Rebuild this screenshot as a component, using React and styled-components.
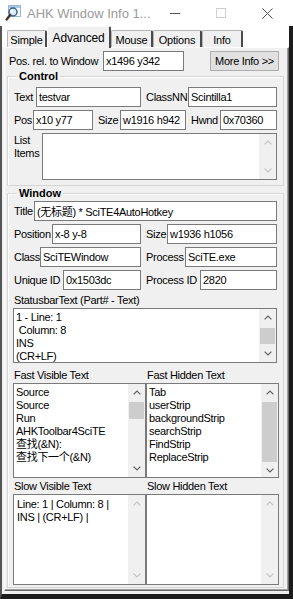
import React from 'react'
import styled, { createGlobalStyle } from 'styled-components'

const GlobalStyle = createGlobalStyle`
  html, body {
    margin: 0;
    padding: 0;
    background: #fff;
  }
  body {
    font-family: "Liberation Sans", Arial, "Noto Sans CJK SC", sans-serif;
    font-size: 11px;
    letter-spacing: -0.3px;
    color: #000;
  }
`

const Window = styled.div`
  width: 293px;
  height: 599px;
  display: flex;
  flex-direction: column;
  background: #f0f0f0;
  overflow: hidden;
`

const TitleBar = styled.div`
  height: 26px;
  flex-shrink: 0;
  display: flex;
  align-items: center;
  background: #fff;
  padding-left: 5px;
`

const Caption = styled.div`
  margin-left: 6px;
  font-size: 13px;
  letter-spacing: 0;
  color: #9a9a9a;
  white-space: nowrap;
`

const CaptionButtons = styled.div`
  margin-left: auto;
  margin-right: 3px;
  display: flex;
  height: 100%;
`

const CaptionButton = styled.div`
  width: 46px;
  display: flex;
  align-items: center;
  justify-content: center;
`

const Body = styled.div`
  flex: 1;
  min-height: 0;
  display: flex;
  flex-direction: column;
  border-left: 2px solid #555;
  border-right: 4px solid #1b1b1b;
  border-bottom: 5px solid #1b1b1b;
`

const TabStrip = styled.div`
  height: 21px;
  flex-shrink: 0;
  display: flex;
  align-items: flex-end;
  padding-left: 5px;
  background: #fff;
  position: relative;
  z-index: 1;
`

const Tab = styled.div`
  box-sizing: border-box;
  width: ${p => p.$w}px;
  height: ${p => (p.$active ? 22 : 17)}px;
  margin-bottom: ${p => (p.$active ? -1 : 0)}px;
  display: flex;
  align-items: center;
  justify-content: center;
  padding-top: ${p => (p.$active ? 0 : 1)}px;
  background: #f0f0f0;
  border-top: 1px solid ${p => (p.$active ? '#fff' : '#b5b5b5')};
  border-left: 1px solid ${p => (p.$active ? '#fff' : '#b5b5b5')};
  border-right: 2px solid #4a4a4a;
  border-top-left-radius: 2px;
  border-top-right-radius: 2px;
  font-size: ${p => (p.$active ? 12 : 11)}px;
  letter-spacing: -0.2px;
  white-space: nowrap;
`

const Panel = styled.div`
  flex: 1;
  min-height: 0;
  display: flex;
  flex-direction: column;
  margin: 0 0 3px 2px;
  padding: 3px 2px 2px 1px;
  border-top: 1px solid #fff;
  border-left: 1px solid #fff;
  border-right: 1px solid #696969;
  border-bottom: 1px solid #696969;
  box-shadow: inset -1px -1px 0 #a0a0a0;
`

const PosRow = styled.div`
  height: 20px;
  display: flex;
  align-items: center;
  padding-left: 3px;
`

const Label = styled.div`
  width: ${p => (p.$w ? `${p.$w}px` : 'auto')};
  flex-shrink: 0;
  white-space: nowrap;
  line-height: 13px;
`

const Input = styled.div`
  box-sizing: border-box;
  height: 20px;
  flex: ${p => (p.$w ? 'none' : 1)};
  width: ${p => (p.$w ? `${p.$w}px` : 'auto')};
  min-width: 0;
  display: flex;
  align-items: center;
  padding: 0 2px;
  border: 1px solid #7a7a7a;
  background: #fff;
  white-space: nowrap;
  overflow: hidden;
`

const Button = styled.div`
  box-sizing: border-box;
  margin-left: auto;
  margin-right: 7px;
  width: 69px;
  height: 20px;
  display: flex;
  align-items: center;
  justify-content: center;
  border: 1px solid #adadad;
  background: #e1e1e1;
`

const GroupBox = styled.div`
  margin: ${p => p.$top}px 2px 0 1px;
  padding: 0 6px ${p => p.$bottom}px 6px;
  border: 1px solid #d5d5d5;
  box-shadow: inset 1px 1px 0 #fff;
  display: flex;
  flex-direction: column;
  flex: ${p => (p.$grow ? 1 : 'none')};
  min-height: 0;
`

const GroupTitle = styled.div`
  align-self: flex-start;
  margin: -7px 0 0 3px;
  padding: 0 2px;
  background: #f0f0f0;
  font-weight: bold;
  letter-spacing: 0;
  line-height: 13px;
`

const Rows = styled.div`
  display: flex;
  flex-direction: column;
  gap: 3px;
  margin-top: ${p => p.$top}px;
`

const FieldRow = styled.div`
  display: flex;
  gap: 5px;
`

const Field = styled.div`
  display: flex;
  align-items: center;
  width: ${p => (p.$w ? `${p.$w}px` : 'auto')};
  flex: ${p => (p.$w ? 'none' : 1)};
`

const ListRow = styled.div`
  display: flex;
  align-items: flex-start;
`

const ItemsLabel = styled(Label)`
  padding-top: 1px;
`

const ListBox = styled.div`
  box-sizing: border-box;
  height: ${p => p.$h}px;
  flex: ${p => (p.$fill ? 1 : 'none')};
  min-width: 0;
  display: flex;
  border: 1px solid #7a7a7a;
  background: #fff;
`

const ListContent = styled.div`
  flex: 1;
  min-width: 0;
  padding: ${p => (p.$edit ? '3px 3px' : '2px 2px')};
  line-height: 13px;
  white-space: pre;
  overflow: hidden;
`

const ScrollBar = styled.div`
  width: 17px;
  flex-shrink: 0;
  display: flex;
  flex-direction: column;
  background: #f0f0f0;
`

const ScrollButton = styled.div`
  height: 17px;
  flex-shrink: 0;
  display: flex;
  align-items: center;
  justify-content: center;
`

const Track = styled.div`
  flex: 1;
  display: flex;
  flex-direction: column;
`

const Thumb = styled.div`
  margin: ${p => p.$top}px 1px 0 1px;
  height: ${p => p.$h}px;
  background: #cdcdcd;
`

const SectionLabel = styled.div`
  line-height: 13px;
  margin-top: ${p => p.$top}px;
  margin-bottom: 1px;
  padding-left: ${p => p.$pad || 0}px;
  white-space: nowrap;
`

const Pair = styled.div`
  display: grid;
  grid-template-columns: 133px 133px;
  justify-content: space-between;
  margin-left: -1px;
`

const PairFill = styled(Pair)`
  flex: 1;
  min-height: 0;
`

const Column = styled.div`
  display: flex;
  flex-direction: column;
  min-height: 0;
`

const WideList = styled.div`
  display: flex;
  margin-left: -1px;
`

const AppIcon = () => (
  <svg width="16" height="16" viewBox="0 0 16 16">
    <rect x="3.5" y="0.5" width="12" height="11" fill="#f4f8fc" stroke="#9bb8d6" />
    <rect x="4" y="1" width="11" height="2" fill="#a9c9ea" />
    <circle cx="8" cy="7" r="4" fill="#d6ebfc" stroke="#3d5f85" strokeWidth="1.4" />
    <circle cx="7" cy="6" r="1.5" fill="#fff" opacity="0.8" />
    <path d="M5.2 9.9 L1.6 14.4" stroke="#4a3424" strokeWidth="2.4" strokeLinecap="round" />
  </svg>
)

const Chevron = ({ dir, off }) => (
  <svg width="8" height="5" viewBox="0 0 8 5">
    <path
      d={dir === 'up' ? 'M0.6 4.4 L4 1 L7.4 4.4' : 'M0.6 0.6 L4 4 L7.4 0.6'}
      fill="none"
      stroke={off ? '#c3c3c3' : '#5f5f5f'}
      strokeWidth="1.2"
    />
  </svg>
)

const Scroll = ({ off, thumbTop, thumbH }) => (
  <ScrollBar>
    <ScrollButton><Chevron dir="up" off={off} /></ScrollButton>
    <Track>{!off && <Thumb $top={thumbTop} $h={thumbH} />}</Track>
    <ScrollButton><Chevron dir="down" off={off} /></ScrollButton>
  </ScrollBar>
)

const tabs = [
  { name: 'Simple', w: 40 },
  { name: 'Advanced', w: 64, active: true },
  { name: 'Mouse', w: 42 },
  { name: 'Options', w: 49 },
  { name: 'Info', w: 41 },
]

const fastVisible = ['Source', 'Source', 'Run', 'AHKToolbar4SciTE', '查找(&N):', '查找下一个(&N)']
const fastHidden = ['Tab', 'userStrip', 'backgroundStrip', 'searchStrip', 'FindStrip', 'ReplaceStrip']

export default function App() {
  return (
    <Window>
      <GlobalStyle />
      <TitleBar>
        <AppIcon />
        <Caption>AHK Window Info 1...</Caption>
        <CaptionButtons>
          <CaptionButton>
            <svg width="10" height="10" viewBox="0 0 10 10"><path d="M0 5.5 H10" stroke="#555" /></svg>
          </CaptionButton>
          <CaptionButton>
            <svg width="10" height="10" viewBox="0 0 10 10"><rect x="0.5" y="0.5" width="9" height="9" fill="none" stroke="#cfcfcf" /></svg>
          </CaptionButton>
          <CaptionButton>
            <svg width="11" height="11" viewBox="0 0 11 11"><path d="M0.5 0.5 L10.5 10.5 M10.5 0.5 L0.5 10.5" stroke="#555" /></svg>
          </CaptionButton>
        </CaptionButtons>
      </TitleBar>
      <Body>
        <TabStrip>
          {tabs.map(t => (
            <Tab key={t.name} $w={t.w} $active={t.active}>{t.name}</Tab>
          ))}
        </TabStrip>
        <Panel>
          <PosRow>
            <Label $w={94}>Pos. rel. to Window</Label>
            <Input $w={81}>x1496 y342</Input>
            <Button>More Info &gt;&gt;</Button>
          </PosRow>

          <GroupBox $top={5} $bottom={5}>
            <GroupTitle>Control</GroupTitle>
            <Rows $top={4}>
              <FieldRow>
                <Field $w={127}><Label $w={22}>Text</Label><Input>testvar</Input></Field>
                <Field><Label $w={42}>ClassNN</Label><Input>Scintilla1</Input></Field>
              </FieldRow>
              <FieldRow>
                <Field $w={79}><Label $w={19}>Pos</Label><Input>x10 y77</Input></Field>
                <Field $w={88}><Label $w={22}>Size</Label><Input>w1916 h942</Input></Field>
                <Field><Label $w={29}>Hwnd</Label><Input>0x70360</Input></Field>
              </FieldRow>
              <ListRow>
                <ItemsLabel $w={28}>List<br />Items</ItemsLabel>
                <ListBox $h={47} $fill>
                  <ListContent />
                  <Scroll off />
                </ListBox>
              </ListRow>
            </Rows>
          </GroupBox>

          <GroupBox $top={7} $bottom={2} $grow>
            <GroupTitle>Window</GroupTitle>
            <Rows $top={1}>
              <FieldRow>
                <Field><Label $w={20}>Title</Label><Input>(无标题) * SciTE4AutoHotkey</Input></Field>
              </FieldRow>
              <FieldRow>
                <Field $w={127}><Label $w={38}>Position</Label><Input>x-8 y-8</Input></Field>
                <Field><Label $w={21}>Size</Label><Input>w1936 h1056</Input></Field>
              </FieldRow>
              <FieldRow>
                <Field $w={127}><Label $w={26}>Class</Label><Input>SciTEWindow</Input></Field>
                <Field><Label $w={39}>Process</Label><Input>SciTE.exe</Input></Field>
              </FieldRow>
              <FieldRow>
                <Field $w={127}><Label $w={49}>Unique ID</Label><Input>0x1503dc</Input></Field>
                <Field><Label $w={54}>Process ID</Label><Input>2820</Input></Field>
              </FieldRow>
            </Rows>

            <SectionLabel $top={4}>StatusbarText (Part# - Text)</SectionLabel>
            <WideList>
              <ListBox $h={55} $fill>
                <ListContent>{'1 - Line: 1\n Column: 8\nINS\n(CR+LF)'}</ListContent>
                <Scroll thumbTop={2} thumbH={16} />
              </ListBox>
            </WideList>

            <Pair>
              <SectionLabel $top={6} $pad={1}>Fast Visible Text</SectionLabel>
              <SectionLabel $top={6} $pad={1}>Fast Hidden Text</SectionLabel>
              <ListBox $h={95}>
                <ListContent>{fastVisible.join('\n')}</ListContent>
                <Scroll thumbTop={1} thumbH={17} />
              </ListBox>
              <ListBox $h={95}>
                <ListContent>{fastHidden.join('\n')}</ListContent>
                <Scroll thumbTop={1} thumbH={60} />
              </ListBox>
            </Pair>

            <PairFill>
              <Column>
                <SectionLabel $top={2} $pad={1}>Slow Visible Text</SectionLabel>
                <ListBox $fill>
                  <ListContent $edit>{'Line: 1 | Column: 8 |\nINS | (CR+LF) |'}</ListContent>
                  <Scroll off />
                </ListBox>
              </Column>
              <Column>
                <SectionLabel $top={2} $pad={1}>Slow Hidden Text</SectionLabel>
                <ListBox $fill>
                  <ListContent $edit />
                  <Scroll off />
                </ListBox>
              </Column>
            </PairFill>
          </GroupBox>
        </Panel>
      </Body>
    </Window>
  )
}
